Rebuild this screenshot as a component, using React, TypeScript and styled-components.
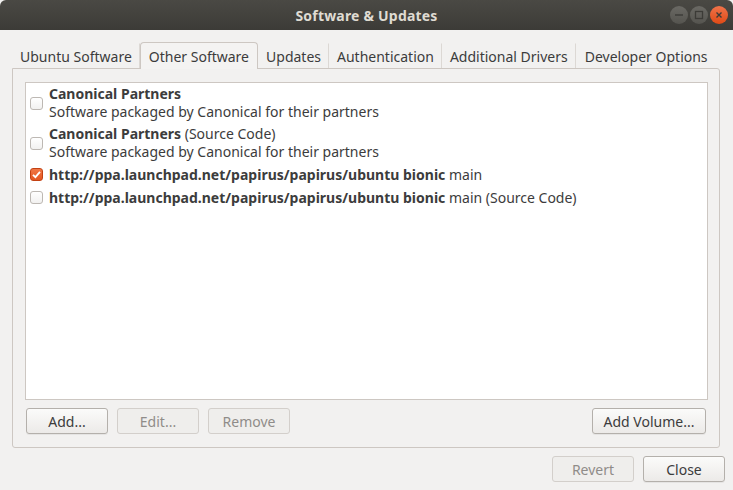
import React from "react";
import styled, { createGlobalStyle } from "styled-components";

const Global = createGlobalStyle`
  html, body { margin: 0; padding: 0; background: #f2f1f0; }
  body { font-family: "Noto Sans", "DejaVu Sans", sans-serif; }
  * { box-sizing: border-box; }
`;

const Window = styled.div`
  width: 733px;
  height: 490px;
  display: flex;
  flex-direction: column;
  background: #f2f1f0;
  color: #3c3c3c;
  font-size: 14px;
  overflow: hidden;
`;

const TitleBar = styled.div`
  height: 30px;
  flex: none;
  background: linear-gradient(#4a4944, #3c3b37);
  border-radius: 6px 6px 0 0;
  display: flex;
  align-items: center;
  justify-content: center;
  position: relative;
`;

const Title = styled.div`
  color: #dfdbd2;
  font-weight: bold;
  font-size: 14px;
  letter-spacing: 0.2px;
`;

const WinButtons = styled.div`
  position: absolute;
  right: 5px;
  top: 6px;
  display: flex;
  gap: 2px;
`;

const WinBtn = styled.div<{ $close?: boolean }>`
  width: 18px;
  height: 18px;
  border-radius: 50%;
  background: ${(p) => (p.$close ? "linear-gradient(#f0734a, #df4a16)" : "linear-gradient(#6a6964, #55544f)")};
  display: flex;
  align-items: center;
  justify-content: center;
`;

const Body = styled.div`
  flex: 1;
  display: flex;
  flex-direction: column;
  padding: 12px 8px 8px 12px;
`;

const TabRow = styled.div`
  display: flex;
  align-items: flex-end;
  height: 26px;
`;

const Tab = styled.div<{ $active?: boolean; $sep?: boolean; $last?: boolean }>`
  height: ${(p) => (p.$active ? "27px" : "25px")};
  margin-bottom: ${(p) => (p.$active ? "-1px" : "0")};
  display: flex;
  align-items: center;
  padding: 0 ${(p) => (p.$active ? "8px" : "7px")};
  ${(p) => (p.$last ? "padding-right: 11px; padding-left: 8px;" : "")}
  color: #3c3c3c;
  background: #f2f1f0;
  border: 1px solid transparent;
  border-bottom: none;
  ${(p) =>
    p.$active
      ? `border-color: #cdc7c2; border-radius: 4px 4px 0 0; background: #f4f3f2; z-index: 1;`
      : ""}
  ${(p) => (p.$sep ? `border-right: 1px solid #dcd8d4;` : "")}
  white-space: nowrap;
`;

const Panel = styled.div`
  width: 708px;
  height: 380px;
  border: 1px solid #cdc7c2;
  border-radius: 0 3px 3px 3px;
  background: #f2f1f0;
  padding: 13px 11px 13px 12px;
  display: flex;
  flex-direction: column;
`;

const List = styled.div`
  flex: 1;
  background: #ffffff;
  border: 1px solid #cdc7c2;
  padding: 0 0 0 4px;
  display: flex;
  flex-direction: column;
`;

const Row = styled.div<{ $two?: boolean }>`
  display: flex;
  align-items: center;
  gap: 6px;
  min-height: ${(p) => (p.$two ? "40px" : "23px")};
`;

const Check = styled.div<{ $on?: boolean }>`
  width: 13px;
  height: 13px;
  flex: none;
  border-radius: 3px;
  border: 1px solid ${(p) => (p.$on ? "#c34113" : "#bdb8b3")};
  background: ${(p) => (p.$on ? "linear-gradient(#f07746, #e4561f)" : "linear-gradient(#ffffff, #f2f1f0)")};
  display: flex;
  align-items: center;
  justify-content: center;
`;

const Texts = styled.div`
  display: flex;
  flex-direction: column;
  line-height: 18px;
`;

const Line = styled.div`
  white-space: nowrap;
`;

const Bold = styled.span`
  font-weight: bold;
`;

const ButtonRow = styled.div`
  display: flex;
  gap: 9px;
  margin-top: 8px;
  padding: 0 2px 0 1px;
`;

const Spacer = styled.div`
  flex: 1;
`;

const Button = styled.button<{ $w: number; $disabled?: boolean }>`
  width: ${(p) => p.$w}px;
  height: 26px;
  font-family: inherit;
  font-size: 14px;
  border-radius: 3px;
  border: 1px solid ${(p) => (p.$disabled ? "#d3cfcb" : "#b4b0ab")};
  background: ${(p) => (p.$disabled ? "#efeeec" : "linear-gradient(#fbfbfa, #eceae8)")};
  color: ${(p) => (p.$disabled ? "#8f8c89" : "#3c3c3c")};
  box-shadow: ${(p) => (p.$disabled ? "none" : "0 1px 0 rgba(0,0,0,0.05)")};
  padding: 0;
`;

const Footer = styled.div`
  display: flex;
  justify-content: flex-end;
  gap: 9px;
  margin-top: 8px;
`;

export default function App() {
  return (
    <>
      <Global />
      <Window>
        <TitleBar>
          <Title>Software &amp; Updates</Title>
          <WinButtons>
            <WinBtn>
              <svg width="10" height="10" viewBox="0 0 10 10">
                <line x1="1" y1="5" x2="9" y2="5" stroke="#3c3b37" strokeWidth="1.4" />
              </svg>
            </WinBtn>
            <WinBtn>
              <svg width="10" height="10" viewBox="0 0 10 10">
                <rect x="1.5" y="1.5" width="7" height="7" fill="none" stroke="#3c3b37" strokeWidth="1.3" />
              </svg>
            </WinBtn>
            <WinBtn $close>
              <svg width="10" height="10" viewBox="0 0 10 10">
                <path d="M2.5 2.5 L7.5 7.5 M7.5 2.5 L2.5 7.5" stroke="#3c3b37" strokeWidth="1.4" />
              </svg>
            </WinBtn>
          </WinButtons>
        </TitleBar>
        <Body>
          <TabRow>
            <Tab $sep>Ubuntu Software</Tab>
            <Tab $active>Other Software</Tab>
            <Tab $sep>Updates</Tab>
            <Tab $sep>Authentication</Tab>
            <Tab $sep>Additional Drivers</Tab>
            <Tab $last>Developer Options</Tab>
          </TabRow>
          <Panel>
            <List>
              <Row $two>
                <Check />
                <Texts>
                  <Line><Bold>Canonical Partners</Bold></Line>
                  <Line>Software packaged by Canonical for their partners</Line>
                </Texts>
              </Row>
              <Row $two>
                <Check />
                <Texts>
                  <Line><Bold>Canonical Partners</Bold> (Source Code)</Line>
                  <Line>Software packaged by Canonical for their partners</Line>
                </Texts>
              </Row>
              <Row>
                <Check $on>
                  <svg width="11" height="11" viewBox="0 0 11 11">
                    <path d="M2 5.8 L4.4 8.2 L9 2.8" fill="none" stroke="#ffffff" strokeWidth="1.8" />
                  </svg>
                </Check>
                <Texts>
                  <Line><Bold>http://ppa.launchpad.net/papirus/papirus/ubuntu bionic</Bold> main</Line>
                </Texts>
              </Row>
              <Row>
                <Check />
                <Texts>
                  <Line><Bold>http://ppa.launchpad.net/papirus/papirus/ubuntu bionic</Bold> main (Source Code)</Line>
                </Texts>
              </Row>
            </List>
            <ButtonRow>
              <Button $w={82}>Add...</Button>
              <Button $w={82} $disabled>Edit...</Button>
              <Button $w={82} $disabled>Remove</Button>
              <Spacer />
              <Button $w={114}>Add Volume...</Button>
            </ButtonRow>
          </Panel>
          <Footer>
            <Button $w={82} $disabled>Revert</Button>
            <Button $w={82}>Close</Button>
          </Footer>
        </Body>
      </Window>
    </>
  );
}
